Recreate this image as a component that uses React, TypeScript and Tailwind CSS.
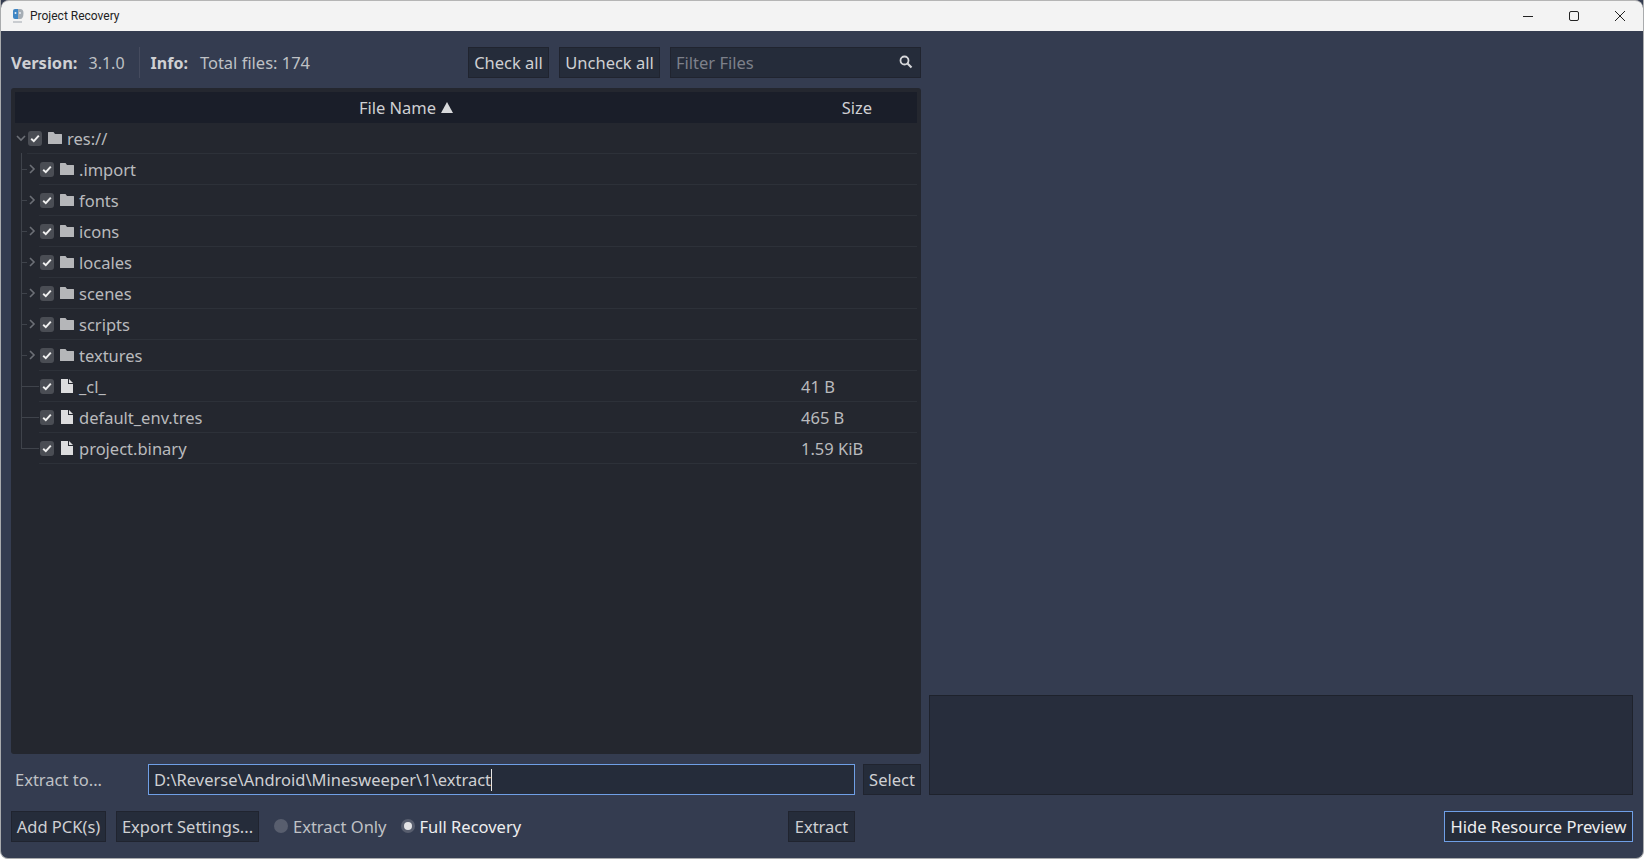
import React from 'react'

const folders = ['.import', 'fonts', 'icons', 'locales', 'scenes', 'scripts', 'textures']
const files = [
  { name: '_cl_', size: '41 B' },
  { name: 'default_env.tres', size: '465 B' },
  { name: 'project.binary', size: '1.59 KiB' },
]

const Check = () => (
  <span className="w-[14px] h-[15px] rounded-[3px] bg-[#4a4d54] flex items-center justify-center shrink-0">
    <svg width="10" height="9" viewBox="0 0 10 9" fill="none">
      <path d="M1.2 4.8 L3.8 7.2 L8.8 1.6" stroke="#f0f0f0" strokeWidth="1.9" />
    </svg>
  </span>
)

const FolderIcon = () => (
  <svg width="14" height="14" viewBox="0 0 14 14" className="shrink-0">
    <path d="M0 1.5 Q0 1 .5 1 H5.5 L7 3 H13.5 Q14 3 14 3.5 V12.5 Q14 13 13.5 13 H.5 Q0 13 0 12.5 Z" fill="#b5b6b9" />
  </svg>
)

const FileIcon = () => (
  <svg width="14" height="14" viewBox="0 0 14 14" className="shrink-0">
    <path d="M1 0 H8 V5 H13 V14 H1 Z M9 0 L13 4 H9 Z" fill="#dcdcde" />
  </svg>
)

const Chevron: React.FC<{ open?: boolean }> = ({ open }) => (
  <svg width="10" height="10" viewBox="0 0 10 10" fill="none" className="shrink-0">
    <path d={open ? 'M1 3 L5 7 L9 3' : 'M3 1 L7 5 L3 9'} stroke="#6c6f76" strokeWidth="1.6" />
  </svg>
)

const Btn: React.FC<{ children: React.ReactNode; className?: string }> = ({ children, className }) => (
  <div className={`h-[31px] flex items-center justify-center whitespace-nowrap bg-[#252c3a] border ${className ?? 'border-[#20242f] text-[#cfd0d3]'}`}>
    {children}
  </div>
)

const Row: React.FC<{ icon: React.ReactNode; name: string; size?: string; folder?: boolean }> = ({ icon, name, size, folder }) => (
  <div className="relative h-[31px] flex items-center text-[#b9babd]">
    {/* tree stub */}
    <span className={`absolute left-[6px] top-[15px] h-px bg-[#3f434b] ${folder ? 'w-[6px]' : 'w-[18px]'}`} />
    <span className="absolute left-[24px] right-0 bottom-0 h-px bg-[#2d3139]" />
    <span className="w-[25px] pl-[12px] shrink-0 -mt-[2px]">{folder && <Chevron />}</span>
    <span className="-mt-[1px]"><Check /></span>
    <span className="ml-[6px] -mt-[2px]">{icon}</span>
    <span className="ml-[5px] flex-1">{name}</span>
    {size && <span className="w-[116px] shrink-0">{size}</span>}
  </div>
)

export default function App() {
  return (
    <div className="w-[1644px] h-[859px] flex flex-col overflow-hidden bg-[#343c50] text-[16.5px] leading-[26px] text-[#cfd0d3] border-l border-r border-b border-[#a9abad] rounded-b-[8px] font-['Noto_Sans',sans-serif]">
      {/* window title bar */}
      <div className="h-[31px] shrink-0 bg-[#f3f3f3] border-t border-[#b5b5b5] rounded-t-[8px] flex items-center text-[12px] text-[#222]">
        <svg width="14" height="16" viewBox="0 0 14 16" className="ml-[10px] shrink-0">
          <path d="M2 3 Q2 1 4 1 H7 V11 H4 Q2 11 2 9 Z" fill="#3f86c4" />
          <path d="M7 1 H9 Q12.5 1 12.5 5 Q12.5 11 9 11 H7 Z" fill="#a5adb5" />
          <circle cx="4.5" cy="5" r="1" fill="#e8eef4" />
          <circle cx="9" cy="5" r="1" fill="#e8eef4" />
          <rect x="2" y="13" width="9" height="2" fill="#c9ccd0" />
        </svg>
        <span className="ml-[5px] font-['Roboto',sans-serif]">Project Recovery</span>
        <div className="ml-auto flex items-center">
          <svg width="46" height="30" viewBox="0 0 46 30" fill="none"><path d="M18 15.5 H28" stroke="#222" strokeWidth="1" /></svg>
          <svg width="46" height="30" viewBox="0 0 46 30" fill="none"><rect x="18.5" y="10.5" width="9" height="9" rx="1.5" stroke="#222" strokeWidth="1" /></svg>
          <svg width="46" height="30" viewBox="0 0 46 30" fill="none"><path d="M18 10 L28 20 M28 10 L18 20" stroke="#222" strokeWidth="1" /></svg>
        </div>
      </div>

      <div className="flex-1 px-[10px] pt-[16px]">
        <div className="flex gap-[8px]">
          {/* left column */}
          <div className="w-[910px] shrink-0 flex flex-col">
            <div className="h-[31px] flex items-center">
              <span className="font-bold text-[#cfd0d3]">Version:</span>
              <span className="ml-[11px] text-[#bfc1c5] text-[16px]">3.1.0</span>
              <span className="ml-[14px] w-px h-[31px] bg-[#454b5e]" />
              <span className="ml-[11px] font-bold text-[#cfd0d3] text-[16px]">Info:</span>
              <span className="ml-[12px] text-[#bfc1c5]">Total files: 174</span>
              <Btn className="ml-auto w-[81px] border-[#20242f] text-[#cfd0d3]">Check all</Btn>
              <Btn className="ml-[10px] w-[101px] border-[#20242f] text-[#cfd0d3]">Uncheck all</Btn>
              <div className="ml-[10px] w-[251px] h-[31px] pl-[5px] pr-[7px] flex items-center justify-between bg-[#252c3a] border border-[#20242f] text-[#7d808a]">
                <span>Filter Files</span>
                <svg width="14" height="14" viewBox="0 0 14 14" fill="none" className="-mt-[2px]">
                  <circle cx="5.5" cy="5.5" r="4" stroke="#d6d7da" strokeWidth="1.8" />
                  <path d="M8.5 8.5 L12.5 12.5" stroke="#d6d7da" strokeWidth="2.2" />
                </svg>
              </div>
            </div>

            {/* file tree */}
            <div className="mt-[10px] h-[666px] p-[4px] bg-[#24272f] rounded-[3px]">
              <div className="h-[31px] flex items-center bg-[#1a1e29] text-[#cfd0d3]">
                <span className="flex-1 flex items-center justify-center gap-[5px]">
                  File Name
                  <svg width="12" height="11" viewBox="0 0 12 11"><path d="M6 0 L12 11 H0 Z" fill="#d8d9db" /></svg>
                </span>
                <span className="w-[120px] text-center">Size</span>
              </div>
              <div className="relative">
                <span className="absolute left-[6px] top-[30px] w-px h-[295px] bg-[#3f434b]" />
                <div className="relative h-[31px] flex items-center text-[#b9babd]">
                  <span className="absolute left-[12px] right-0 bottom-0 h-px bg-[#2d3139]" />
                  <span className="w-[13px] pl-[1px] shrink-0 -mt-[2px]"><Chevron open /></span>
                  <span className="-mt-[1px]"><Check /></span>
                  <span className="ml-[6px] -mt-[2px]"><FolderIcon /></span>
                  <span className="ml-[5px]">res://</span>
                </div>
                {folders.map((name) => (
                  <Row key={name} name={name} icon={<FolderIcon />} folder />
                ))}
                {files.map((f) => (
                  <Row key={f.name} name={f.name} size={f.size} icon={<FileIcon />} />
                ))}
              </div>
            </div>

            {/* extract path */}
            <div className="mt-[10px] h-[31px] flex items-center">
              <span className="w-[137px] pl-[4px] shrink-0 text-[#bfc1c5]">Extract to...</span>
              <div className="w-[707px] h-[31px] px-[5px] flex items-center bg-[#252c3a] border border-[#6f9fe6] text-[#cfd0d3]">
                <span>D:\Reverse\Android\Minesweeper\1\extract</span>
                <span className="w-px h-[22px] bg-[#e6e6e6]" />
              </div>
              <Btn className="ml-[8px] w-[58px] border-[#20242f] text-[#cfd0d3]">Select</Btn>
            </div>
          </div>

          {/* resource preview */}
          <div className="w-[704px] shrink-0 flex flex-col justify-end">
            <div className="h-[100px] bg-[#272d3c] border border-[#1e222c]" />
          </div>
        </div>

        {/* bottom actions */}
        <div className="mt-[16px] flex items-center w-[1622px]">
          <div className="w-[844px] shrink-0 flex items-center">
            <Btn className="w-[95px] border-[#20242f] text-[#cfd0d3]">Add PCK(s)</Btn>
            <Btn className="ml-[10px] w-[143px] border-[#20242f] text-[#cfd0d3]">Export Settings...</Btn>
            <span className="ml-[15px] w-[14px] h-[14px] rounded-full bg-[#585e6e] -mt-[2px]" />
            <span className="ml-[5px] text-[#bfc1c5]">Extract Only</span>
            <span className="ml-[14px] w-[14px] h-[14px] rounded-full bg-[#585e6e] -mt-[2px] flex items-center justify-center">
              <span className="w-[8px] h-[8px] rounded-full bg-[#e4e4e6]" />
            </span>
            <span className="ml-[5px] text-[#eeeeef]">Full Recovery</span>
            <Btn className="ml-auto w-[67px] border-[#20242f] text-[#cfd0d3]">Extract</Btn>
          </div>
          <Btn className="ml-auto w-[189px] border-[#6f9fe6] text-[#eeeeef]">Hide Resource Preview</Btn>
        </div>
      </div>
    </div>
  )
}
